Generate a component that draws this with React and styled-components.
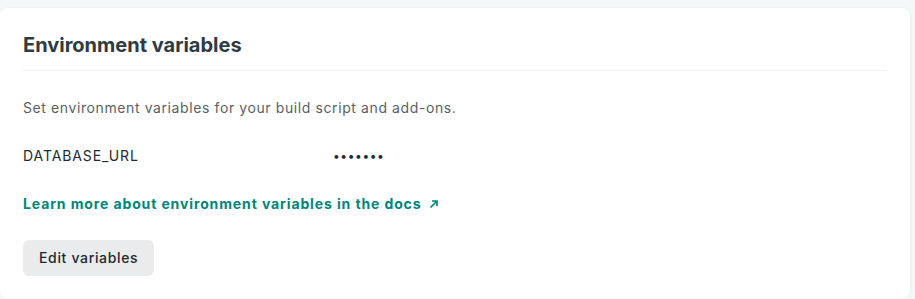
import React from "react";
import styled, { createGlobalStyle } from "styled-components";

const GlobalStyle = createGlobalStyle`
  html, body {
    margin: 0;
    padding: 0;
    background: #f3f8f8;
  }
  body {
    font-family: Inter, "Liberation Sans", Arial, sans-serif;
    -webkit-font-smoothing: antialiased;
  }
`;

const variables = [{ key: "DATABASE_URL", value: "•••••••" }];

function ArrowIcon() {
  return (
    <svg width="10" height="10" viewBox="0 0 10 10" aria-hidden="true">
      <path
        d="M1.5 8.5 L8 2 M3 2 H8 V7"
        fill="none"
        stroke="currentColor"
        strokeWidth="1.7"
      />
    </svg>
  );
}

export default function App() {
  return (
    <>
      <GlobalStyle />
      <Page>
        <Card>
          <Header>
            <Title>Environment variables</Title>
          </Header>
          <Description>
            Set environment variables for your build script and add-ons.
          </Description>
          <VarList>
            {variables.map((v) => (
              <VarRow key={v.key}>
                <VarKey>{v.key}</VarKey>
                <VarValue>{v.value}</VarValue>
              </VarRow>
            ))}
          </VarList>
          <DocsLink href="#">
            Learn more about environment variables in the docs
            <ArrowIcon />
          </DocsLink>
          <Actions>
            <Button type="button">Edit variables</Button>
          </Actions>
        </Card>
      </Page>
    </>
  );
}

const Page = styled.div`
  padding: 8px 5px 0 0;
`;

const Card = styled.section`
  background: #ffffff;
  border-radius: 8px;
  padding: 23px 23px 22px 23px;
  height: 290px;
  box-sizing: border-box;
  box-shadow: 1px 0 3px rgba(14, 30, 37, 0.05);
`;

const Header = styled.div`
  padding-bottom: 11px;
  border-bottom: 1px solid #eef0f1;
`;

const Title = styled.h2`
  margin: 0;
  font-size: 20px;
  line-height: 28px;
  font-weight: 700;
  color: #2e3b42;
`;

const Description = styled.p`
  margin: 27px 0 0;
  font-size: 14px;
  line-height: 20px;
  letter-spacing: 0.6px;
  color: #595f64;
`;

const VarList = styled.dl`
  margin: 28px 0 0;
`;

const VarRow = styled.div`
  display: grid;
  grid-template-columns: 310px 1fr;
  align-items: center;
  font-size: 14px;
  line-height: 20px;
  color: #222b31;
`;

const VarKey = styled.dt`
  margin: 0;
  letter-spacing: 0.9px;
`;

const VarValue = styled.dd`
  margin: 0;
  font-size: 12px;
  letter-spacing: 0.6px;
`;

const DocsLink = styled.a`
  display: inline-flex;
  align-items: center;
  gap: 8px;
  margin-top: 28px;
  font-size: 14px;
  line-height: 20px;
  font-weight: 700;
  letter-spacing: 0.88px;
  color: #00857a;
  text-decoration: none;
`;

const Actions = styled.div`
  margin-top: 26px;
`;

const Button = styled.button`
  display: block;
  height: 36px;
  padding: 0 16px;
  border: none;
  border-radius: 6px;
  background: #e9ebed;
  color: #1e292f;
  font-family: Inter, "Liberation Sans", Arial, sans-serif;
  font-size: 14px;
  line-height: 20px;
  font-weight: 500;
  letter-spacing: 0.66px;
  cursor: pointer;
`;
